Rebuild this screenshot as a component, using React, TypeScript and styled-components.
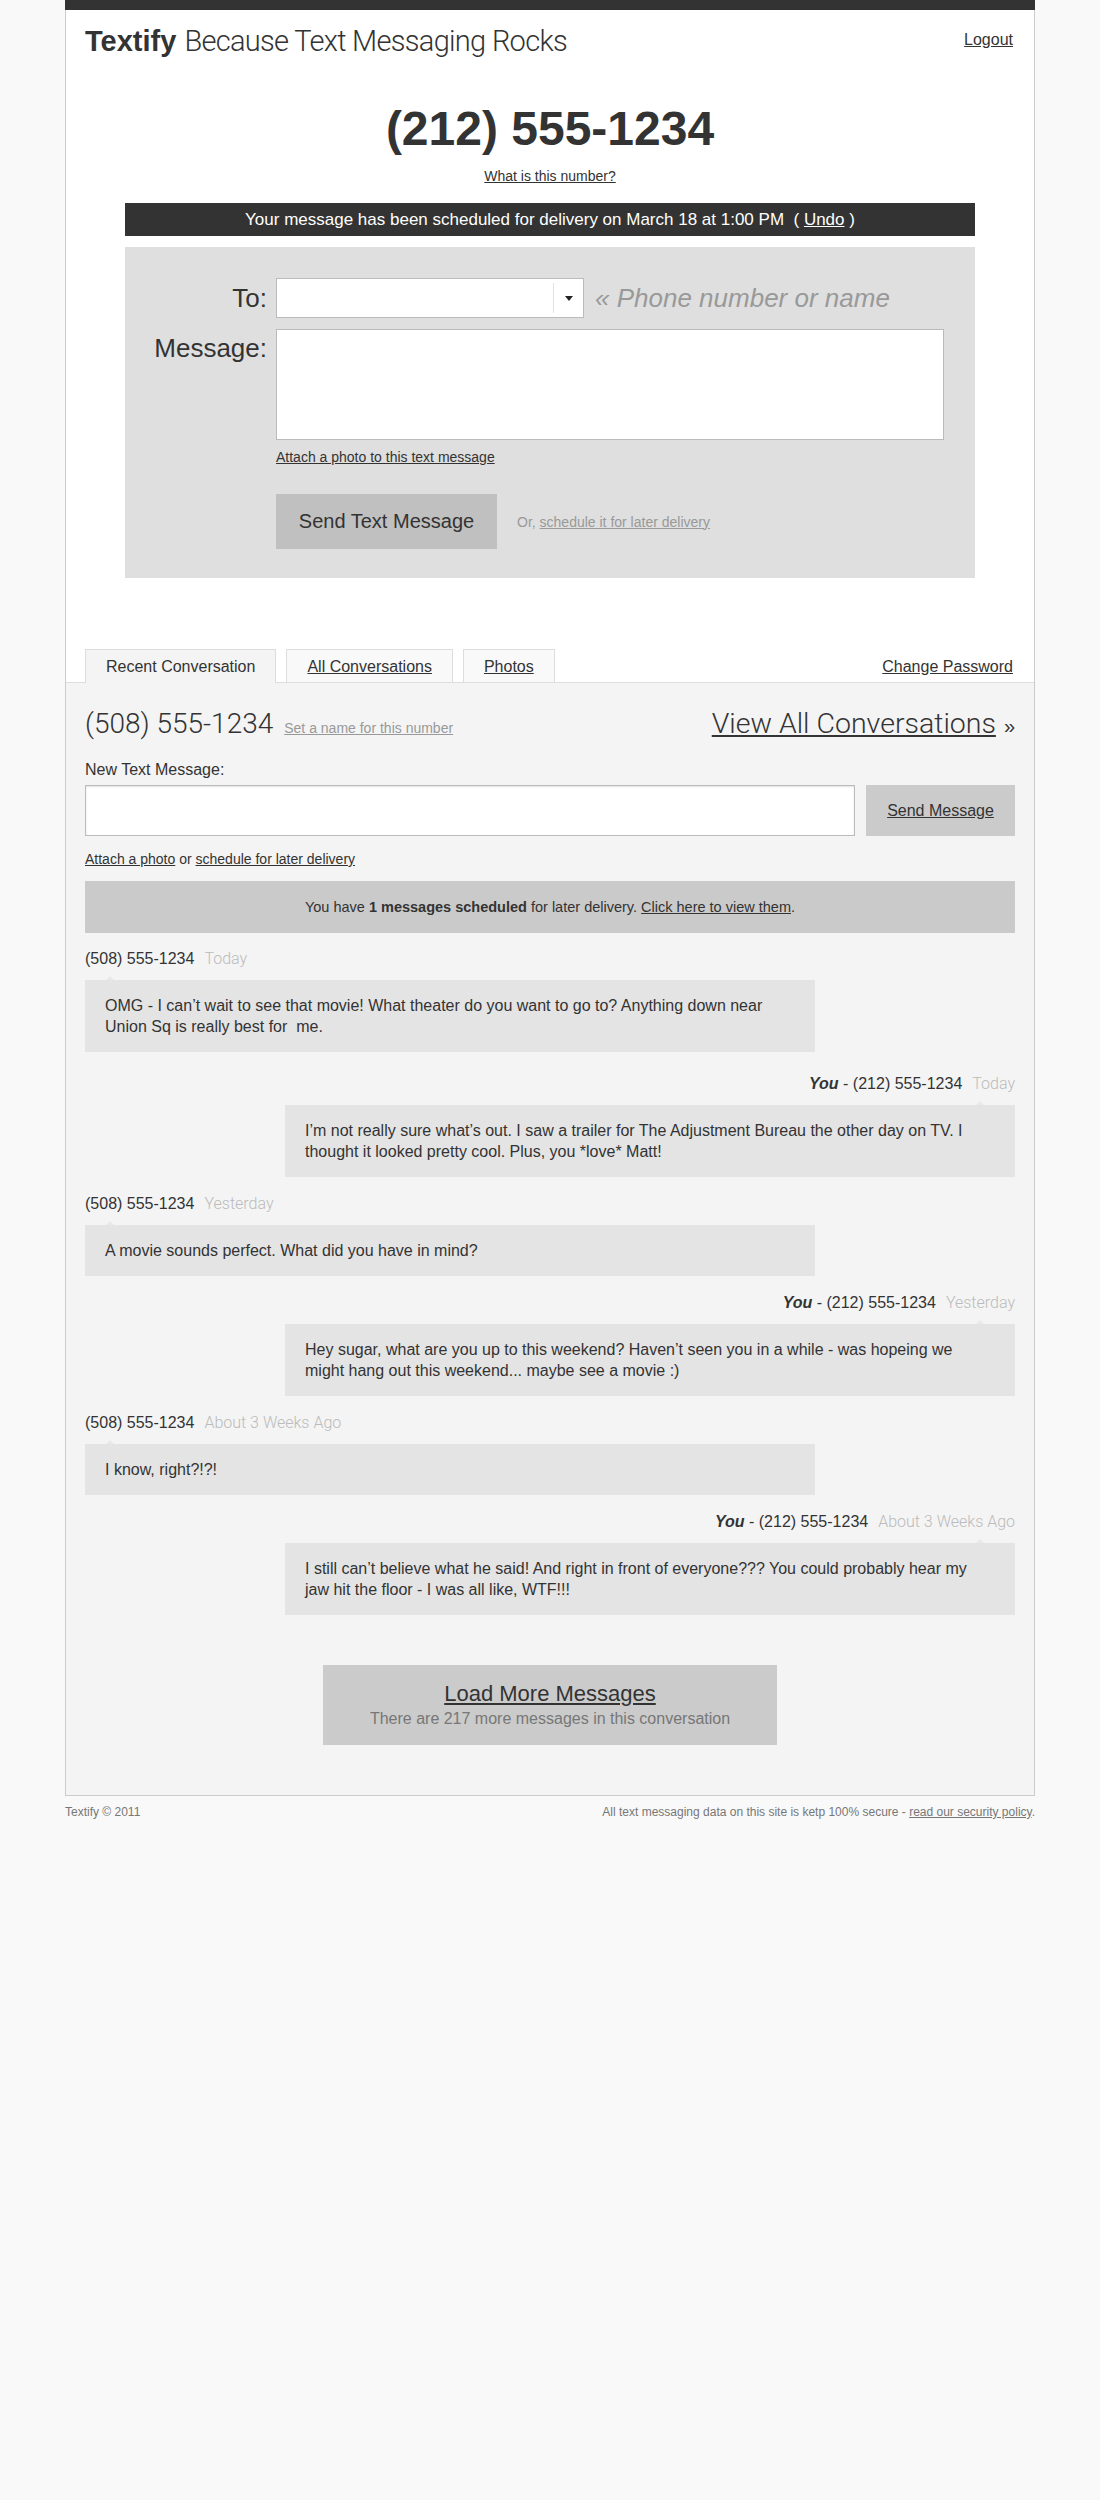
import styled, { createGlobalStyle } from "styled-components";

const GlobalStyle = createGlobalStyle`
  body {
    margin: 0;
    background: #f9f9f9;
    font-family: "Liberation Sans", Arial, sans-serif;
    color: #333;
  }
  a { color: #333; }
`;

type Msg = { mine: boolean; who: string; when: string; text: string };

const messages: Msg[] = [
  { mine: false, who: "(508) 555-1234", when: "Today", text: "OMG - I can’t wait to see that movie! What theater do you want to go to? Anything down near Union Sq is really best for \u00a0me." },
  { mine: true, who: "(212) 555-1234", when: "Today", text: "I’m not really sure what’s out. I saw a trailer for The Adjustment Bureau the other day on TV. I thought it looked pretty cool. Plus, you *love* Matt!" },
  { mine: false, who: "(508) 555-1234", when: "Yesterday", text: "A movie sounds perfect. What did you have in mind?" },
  { mine: true, who: "(212) 555-1234", when: "Yesterday", text: "Hey sugar, what are you up to this weekend? Haven’t seen you in a while - was hopeing we might hang out this weekend... maybe see a movie :)" },
  { mine: false, who: "(508) 555-1234", when: "About 3 Weeks Ago", text: "I know, right?!?!" },
  { mine: true, who: "(212) 555-1234", when: "About 3 Weeks Ago", text: "I still can’t believe what he said! And right in front of everyone??? You could probably hear my jaw hit the floor - I was all like, WTF!!!" },
];

function App() {
  return (
    <>
      <GlobalStyle />
      <Page>
        <TopBar />
        <Header>
          <Brand>
            <strong>Textify</strong> <Light>Because Text Messaging Rocks</Light>
          </Brand>
          <TopLink href="#">Logout</TopLink>
        </Header>

        <BigNumber>(212) 555-1234</BigNumber>
        <Center>
          <a href="#">What is this number?</a>
        </Center>

        <Notice>
          Your message has been scheduled for delivery on March 18 at 1:00 PM&nbsp;&nbsp;( <a href="#">Undo</a> )
        </Notice>

        <Panel>
          <FormRow $gap={0}>
            <FormLabel>To:</FormLabel>
            <ToBox>
              <ToInput />
              <DropButton>
                <Caret />
              </DropButton>
            </ToBox>
            <Hint>« Phone number or name</Hint>
          </FormRow>
          <FormRow $gap={11}>
            <FormLabel $top>Message:</FormLabel>
            <MessageArea />
          </FormRow>
          <FormRow $gap={8}>
            <FormLabel />
            <SmallLink href="#">Attach a photo to this text message</SmallLink>
          </FormRow>
          <FormRow $gap={28}>
            <FormLabel />
            <BigButton>Send Text Message</BigButton>
            <OrText>
              Or, <a href="#">schedule it for later delivery</a>
            </OrText>
          </FormRow>
        </Panel>

        <TabRow>
          <Tab $active>Recent Conversation</Tab>
          <Tab>
            <a href="#">All Conversations</a>
          </Tab>
          <Tab>
            <a href="#">Photos</a>
          </Tab>
          <TabRight href="#">Change Password</TabRight>
        </TabRow>

        <Content>
          <ConvHeader>
            <div>
              <ConvNumber>(508) 555-1234</ConvNumber>
              <SetName href="#">Set a name for this number</SetName>
            </div>
            <div>
              <ViewAll href="#">View All Conversations</ViewAll>
              <Guillemet>»</Guillemet>
            </div>
          </ConvHeader>

          <NewLabel>New Text Message:</NewLabel>
          <ComposeRow>
            <ComposeInput />
            <SendButton>
              <a href="#">Send Message</a>
            </SendButton>
          </ComposeRow>
          <AttachLine>
            <a href="#">Attach a photo</a> or <a href="#">schedule for later delivery</a>
          </AttachLine>

          <Scheduled>
            <span>
              You have <b>1 messages scheduled</b> for later delivery. <a href="#">Click here to view them</a>.
            </span>
          </Scheduled>

          <MessageList>
            {messages.map((m, i) => (
              <Message key={i} $mine={m.mine}>
                <MsgHead $mine={m.mine}>
                  {m.mine && <You>You</You>}
                  {m.mine && " - "}
                  {m.who}
                  <When>{m.when}</When>
                </MsgHead>
                <Bubble $mine={m.mine}>{m.text}</Bubble>
              </Message>
            ))}
          </MessageList>

          <LoadMore>
            <a href="#">Load More Messages</a>
            <LoadSub>There are 217 more messages in this conversation</LoadSub>
          </LoadMore>
        </Content>
      </Page>
      <Footer>
        <span>Textify © 2011</span>
        <span>
          All text messaging data on this site is ketp 100% secure - <a href="#">read our security policy</a>.
        </span>
      </Footer>
    </>
  );
}

const Page = styled.div`
  width: 970px;
  margin: 0 auto;
  box-sizing: border-box;
  background: #fff;
  border: 1px solid #ccc;
  border-top: none;
`;

const TopBar = styled.div`
  height: 10px;
  background: #333;
  margin: 0 -1px;
`;

const Header = styled.div`
  display: flex;
  justify-content: space-between;
  align-items: center;
  padding: 14px 21px 0 19px;
`;

const Brand = styled.h1`
  margin: 0;
  font-size: 29px;
  line-height: 34px;
  font-weight: normal;
  color: #333;
  strong { font-weight: bold; }
`;

const Light = styled.span`
  font-family: Roboto, "Liberation Sans", sans-serif;
  font-weight: 300;
  letter-spacing: -0.7px;
`;

const TopLink = styled.a`
  font-size: 16px;
  line-height: 20px;
  margin-bottom: 2px;
`;

const BigNumber = styled.div`
  margin-top: 43px;
  text-align: center;
  font-size: 48px;
  line-height: 56px;
  font-weight: bold;
`;

const Center = styled.div`
  margin-top: 10px;
  text-align: center;
  font-size: 14px;
  line-height: 18px;
`;

const Notice = styled.div`
  margin: 18px 59px 0;
  background: #333;
  color: #fff;
  font-size: 17px;
  line-height: 33px;
  text-align: center;
  a { color: #fff; }
`;

const Panel = styled.div`
  margin: 11px 59px 0;
  background: #dfdfdf;
  padding: 31px 31px 29px 0;
`;

const FormRow = styled.div<{ $gap: number }>`
  display: flex;
  align-items: center;
  margin-top: ${(p) => p.$gap}px;
`;

const FormLabel = styled.label<{ $top?: boolean }>`
  flex: 0 0 151px;
  box-sizing: border-box;
  padding: ${(p) => (p.$top ? "4px" : "0")} 9px 0 0;
  align-self: ${(p) => (p.$top ? "flex-start" : "center")};
  text-align: right;
  font-size: 26px;
  line-height: 30px;
`;

const ToBox = styled.div`
  width: 308px;
  height: 40px;
  box-sizing: border-box;
  border: 1px solid #bbb;
  background: #fff;
  display: flex;
`;

const ToInput = styled.input`
  flex: 1;
  border: none;
  outline: none;
  background: transparent;
  font-size: 18px;
  padding: 0 8px;
`;

const DropButton = styled.div`
  width: 29px;
  margin: 4px 0;
  border-left: 1px solid #e2e2e2;
  display: flex;
  align-items: center;
  justify-content: center;
`;

const Caret = styled.span`
  width: 0;
  height: 0;
  border-left: 4px solid transparent;
  border-right: 4px solid transparent;
  border-top: 5px solid #222;
`;

const Hint = styled.span`
  margin-left: 11px;
  font-size: 26px;
  font-style: italic;
  color: #999;
`;

const MessageArea = styled.textarea`
  flex: 1;
  height: 111px;
  box-sizing: border-box;
  border: 1px solid #bbb;
  background: #fff;
  resize: none;
  outline: none;
`;

const SmallLink = styled.a`
  font-size: 14px;
  line-height: 18px;
`;

const BigButton = styled.button`
  width: 221px;
  height: 55px;
  border: none;
  background: #c0c0c0;
  color: #333;
  font-family: "Liberation Sans", Arial, sans-serif;
  font-size: 20px;
  padding: 0;
`;

const OrText = styled.span`
  margin-left: 20px;
  font-size: 14px;
  color: #999;
  a { color: #999; }
`;

const TabRow = styled.div`
  margin-top: 71px;
  display: flex;
  align-items: flex-end;
  gap: 10px;
  padding: 0 21px 0 19px;
`;

const Tab = styled.div<{ $active?: boolean }>`
  position: relative;
  height: ${(p) => (p.$active ? 33 : 32)}px;
  margin-bottom: ${(p) => (p.$active ? -1 : 0)}px;
  padding: 0 20px;
  border: 1px solid #ddd;
  border-bottom: none;
  background: ${(p) => (p.$active ? "#f4f4f4" : "#f9f9f9")};
  font-size: 16px;
  line-height: 33px;
`;

const TabRight = styled.a`
  margin-left: auto;
  align-self: center;
  font-size: 16px;
  line-height: 20px;
  margin-top: 2px;
`;

const Content = styled.div`
  background: #f4f4f4;
  border-top: 1px solid #ddd;
  padding: 24px 19px 50px;
`;

const ConvHeader = styled.div`
  display: flex;
  justify-content: space-between;
  align-items: baseline;
`;

const ConvNumber = styled.span`
  font-family: Roboto, "Liberation Sans", sans-serif;
  font-weight: 300;
  font-size: 28px;
  line-height: 34px;
`;

const SetName = styled.a`
  margin-left: 11px;
  font-size: 14px;
  color: #999;
  &:link { color: #999; }
`;

const ViewAll = styled.a`
  font-family: Roboto, "Liberation Sans", sans-serif;
  font-weight: 300;
  font-size: 28.5px;
  line-height: 34px;
`;

const Guillemet = styled.span`
  margin-left: 8px;
  font-size: 20px;
`;

const NewLabel = styled.div`
  margin-top: 19px;
  font-size: 16px;
  line-height: 20px;
`;

const ComposeRow = styled.div`
  margin-top: 5px;
  display: flex;
  gap: 11px;
  height: 51px;
`;

const ComposeInput = styled.input`
  flex: 1;
  box-sizing: border-box;
  border: 1px solid #bbb;
  background: #fff;
  box-shadow: inset 0 1px 2px rgba(0, 0, 0, 0.12);
  outline: none;
`;

const SendButton = styled.div`
  width: 149px;
  background: #cbcbcb;
  display: flex;
  align-items: center;
  justify-content: center;
  font-size: 16px;
`;

const AttachLine = styled.div`
  margin-top: 14px;
  font-size: 14px;
  line-height: 18px;
`;

const Scheduled = styled.div`
  margin-top: 13px;
  height: 52px;
  background: #cacaca;
  display: flex;
  align-items: center;
  justify-content: center;
  font-size: 14.5px;
`;

const MessageList = styled.div`
  display: flex;
  flex-direction: column;
  gap: 17px;
  padding-top: 16px;
`;

const Message = styled.div<{ $mine: boolean }>`
  display: flex;
  flex-direction: column;
  align-items: ${(p) => (p.$mine ? "flex-end" : "flex-start")};
  &:first-child {
    margin-bottom: 5px;
  }
`;

const MsgHead = styled.div<{ $mine: boolean }>`
  font-size: 16px;
  line-height: 20px;
  text-align: ${(p) => (p.$mine ? "right" : "left")};
`;

const You = styled.b`
  font-style: italic;
`;

const When = styled.span`
  margin-left: 10px;
  font-family: Roboto, "Liberation Sans", sans-serif;
  font-weight: 300;
  color: #bbb;
`;

const Bubble = styled.div<{ $mine: boolean }>`
  position: relative;
  margin-top: 11px;
  width: 730px;
  box-sizing: border-box;
  padding: 15px 24px 15px 20px;
  background: #e4e4e4;
  font-size: 16px;
  line-height: 21px;
  &::before {
    content: "";
    position: absolute;
    top: -4px;
    ${(p) => (p.$mine ? "right: 31px;" : "left: 21px;")}
    border-left: 4px solid transparent;
    border-right: 4px solid transparent;
    border-bottom: 4px solid #e9e9e9;
  }
`;

const LoadMore = styled.div`
  width: 454px;
  margin: 50px auto 0;
  padding: 15px 0;
  background: #cbcbcb;
  text-align: center;
  a {
    font-size: 22px;
    line-height: 28px;
  }
`;

const LoadSub = styled.div`
  font-size: 16px;
  line-height: 22px;
  color: #777;
`;

const Footer = styled.div`
  width: 970px;
  margin: 8px auto 0;
  display: flex;
  justify-content: space-between;
  font-size: 12px;
  line-height: 16px;
  color: #777;
  a { color: #777; }
`;

export default App;
